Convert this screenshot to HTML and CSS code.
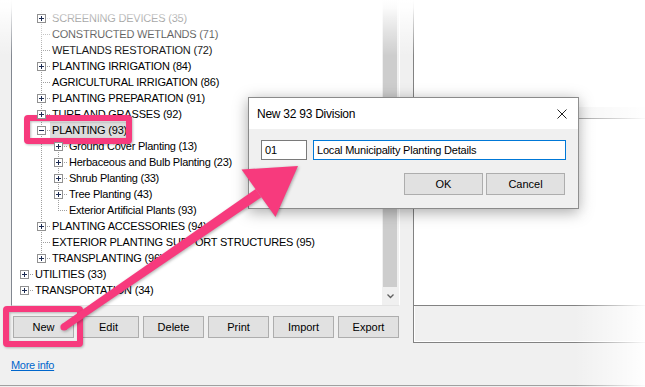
FILE: index.html
```html
<!DOCTYPE html>
<html>
<head>
<meta charset="utf-8">
<link rel="stylesheet" href="styles.css">
</head>
<body>
<div class="window">
  <div class="leftcol">
    <div class="tree">
      <ul class="nodes">
        <li class="row"><span class="c e"></span><span class="c t"><span class="bx p"></span></span><span class="lbl">SCREENING DEVICES (35)</span></li>
        <li class="row"><span class="c e"></span><span class="c t"></span><span class="lbl">CONSTRUCTED WETLANDS (71)</span></li>
        <li class="row"><span class="c e"></span><span class="c t"></span><span class="lbl">WETLANDS RESTORATION (72)</span></li>
        <li class="row"><span class="c e"></span><span class="c t"><span class="bx p"></span></span><span class="lbl">PLANTING IRRIGATION (84)</span></li>
        <li class="row"><span class="c e"></span><span class="c t"></span><span class="lbl">AGRICULTURAL IRRIGATION (86)</span></li>
        <li class="row"><span class="c e"></span><span class="c t"><span class="bx p"></span></span><span class="lbl">PLANTING PREPARATION (91)</span></li>
        <li class="row"><span class="c e"></span><span class="c t"><span class="bx p"></span></span><span class="lbl">TURF AND GRASSES (92)</span></li>
        <li class="row"><span class="c e"></span><span class="c t"><span class="bx m"></span></span><span class="lbl sel">PLANTING (93)</span></li>
        <li class="row lc"><span class="c e"></span><span class="c v"></span><span class="c t"><span class="bx p"></span></span><span class="lbl">Ground Cover Planting (13)</span></li>
        <li class="row lc"><span class="c e"></span><span class="c v"></span><span class="c t"><span class="bx p"></span></span><span class="lbl">Herbaceous and Bulb Planting (23)</span></li>
        <li class="row lc"><span class="c e"></span><span class="c v"></span><span class="c t"><span class="bx p"></span></span><span class="lbl">Shrub Planting (33)</span></li>
        <li class="row lc"><span class="c e"></span><span class="c v"></span><span class="c t"><span class="bx p"></span></span><span class="lbl">Tree Planting (43)</span></li>
        <li class="row lc"><span class="c e"></span><span class="c v"></span><span class="c l"></span><span class="lbl">Exterior Artificial Plants (93)</span></li>
        <li class="row"><span class="c e"></span><span class="c t"><span class="bx p"></span></span><span class="lbl">PLANTING ACCESSORIES (94)</span></li>
        <li class="row"><span class="c e"></span><span class="c t"></span><span class="lbl">EXTERIOR PLANTING SUPPORT STRUCTURES (95)</span></li>
        <li class="row"><span class="c e"></span><span class="c l"><span class="bx p"></span></span><span class="lbl">TRANSPLANTING (96)</span></li>
        <li class="row"><span class="c h"><span class="bx p"></span></span><span class="lbl">UTILITIES (33)</span></li>
        <li class="row"><span class="c h"><span class="bx p"></span></span><span class="lbl">TRANSPORTATION (34)</span></li>
      </ul>
      <div class="vscroll">
        <div class="thumb"></div>
        <svg class="down" width="7" height="5" viewBox="0 0 7 5"><path d="M0.5 0.5 L3.5 3.5 L6.5 0.5" fill="none" stroke="#606060" stroke-width="1.3"/></svg>
      </div>
    </div>
    <div class="btns">
      <button class="btn">New</button>
      <button class="btn">Edit</button>
      <button class="btn">Delete</button>
      <button class="btn">Print</button>
      <button class="btn">Import</button>
      <button class="btn">Export</button>
    </div>
    <a class="more" href="#">More info</a>
  </div>
  <div class="rightcol">
    <div class="list"><div class="lhead"></div></div>
    <div class="status"></div>
  </div>
</div>

<div class="dialog">
  <div class="dtitle">
    <span class="dtext">New 32 93 Division</span>
    <svg class="close" width="10" height="10" viewBox="0 0 10 10"><path d="M0.5 0.5 L9.5 9.5 M9.5 0.5 L0.5 9.5" stroke="#222" stroke-width="1"/></svg>
  </div>
  <div class="dbody">
    <div class="drow">
      <div class="inp code">01</div>
      <div class="inp name">Local Municipality Planting Details</div>
    </div>
    <div class="drow dbtns">
      <button class="dbtn">OK</button>
      <button class="dbtn">Cancel</button>
    </div>
  </div>
</div>

<div class="hl hl-planting"></div>
<div class="hl hl-new"></div>

<svg class="arrow" width="645" height="387" viewBox="0 0 645 387">
  <g fill="#f73a7d">
    <circle cx="64" cy="327" r="3.6"/>
    <polygon points="62,324 255.7,189.1 261.3,197.3 66,330"/>
    <polygon points="298,166 241.5,169.5 275.5,217"/>
  </g>
</svg>

<div class="fade-top"></div>
<div class="fade-right"></div>
</body>
</html>
```

FILE: styles.css
```css
* { box-sizing: border-box; }
html, body { margin: 0; padding: 0; }
body {
  width: 645px;
  height: 387px;
  overflow: hidden;
  position: relative;
  background: #f0f0f0;
  font-family: "Liberation Sans", Arial, sans-serif;
  font-size: 11px;
  color: #000;
}

.window {
  display: flex;
  height: 386px;
  padding-left: 11px;
  border-bottom: 1px solid #a0a0a0;
}

.leftcol {
  width: 389px;
  display: flex;
  flex-direction: column;
  flex: none;
}

.tree {
  height: 306px;
  display: flex;
  background: #fff;
  border-left: 1px solid #828790;
  border-right: 1px solid #fff;
  border-bottom: 1px solid #e3e3e3;
}

.nodes {
  flex: 1;
  margin: 0;
  padding: 10px 0 0 4px;
  list-style: none;
  overflow: hidden;
}

.row {
  display: flex;
  height: 16px;
  white-space: nowrap;
}

.c {
  width: 17px;
  height: 16px;
  flex: none;
  position: relative;
}

.c.v::before, .c.t::before, .c.l::before {
  content: "";
  position: absolute;
  left: 8px;
  top: 0;
  width: 1px;
  height: 16px;
  background: repeating-linear-gradient(to bottom, #a0a0a0 0 1px, transparent 1px 2px);
}
.c.l::before { height: 9px; }

.c.t::after, .c.l::after, .c.h::after {
  content: "";
  position: absolute;
  left: 9px;
  top: 8px;
  width: 9px;
  height: 1px;
  background: repeating-linear-gradient(to right, transparent 0 1px, #a0a0a0 1px 2px);
}

.bx {
  position: absolute;
  left: 4px;
  top: 4px;
  width: 9px;
  height: 9px;
  background: #fff;
  border: 1px solid #919191;
  z-index: 1;
}
.bx::before {
  content: "";
  position: absolute;
  left: 1px;
  top: 3px;
  width: 5px;
  height: 1px;
  background: #1c2b52;
}
.bx.p::after {
  content: "";
  position: absolute;
  left: 3px;
  top: 1px;
  width: 1px;
  height: 5px;
  background: #1c2b52;
}

.lbl {
  padding: 0 2px;
  height: 16px;
  line-height: 16px;
  letter-spacing: -0.2px;
}
.lc .lbl { letter-spacing: -0.25px; }
.lbl.sel { background: #dcdcdc; }

.vscroll {
  width: 17px;
  flex: none;
  background: #f0f0f0;
  position: relative;
}
.thumb {
  position: absolute;
  left: 1px;
  right: 2px;
  top: 0;
  height: 287px;
  background: #cdcdcd;
}
.down {
  position: absolute;
  left: 5px;
  top: 294px;
}

.btns {
  display: flex;
  gap: 4px;
  margin-top: 10px;
  padding-left: 2px;
}
.btn, .dbtn {
  font-family: "Liberation Sans", Arial, sans-serif;
  font-size: 11px;
  color: #000;
  background: #e1e1e1;
  border: 1px solid #adadad;
  padding: 0;
  margin: 0;
}
.btn {
  width: 61px;
  height: 22px;
}

.more {
  margin-top: 21px;
  color: #0066cc;
  text-decoration: underline;
  font-size: 11px;
  letter-spacing: -0.3px;
  line-height: 13px;
  align-self: flex-start;
}

.rightcol {
  margin-left: 13px;
  width: 240px;
  flex: none;
}
.list {
  height: 306px;
  background: #fff;
  border-left: 1px solid #828282;
  border-bottom: 1px solid #828282;
  padding-top: 107px;
}
.lhead {
  height: 12px;
  background: #f6f6f6;
  border-bottom: 1px solid #a0a0a0;
}
.status {
  height: 37px;
  border-left: 1px solid #828282;
  border-bottom: 1px solid #828282;
  box-shadow: inset 1px -1px 0 #fff;
}

.dialog {
  position: absolute;
  left: 248px;
  top: 97px;
  width: 331px;
  height: 112px;
  background: #f0f0f0;
  border: 1px solid #8a8a8a;
  box-shadow: 0 3px 14px rgba(0, 0, 0, 0.35);
}
.dtitle {
  height: 31px;
  background: #fff;
  display: flex;
  align-items: center;
  justify-content: space-between;
  padding: 0 11px 0 8px;
}
.dtext {
  font-size: 12px;
  letter-spacing: -0.25px;
}
.dbody {
  padding: 11px 12px 0 12px;
}
.drow {
  display: flex;
  gap: 6px;
}
.inp {
  height: 20px;
  background: #fff;
  line-height: 18px;
  padding-left: 3px;
  font-size: 11px;
  letter-spacing: -0.2px;
  white-space: nowrap;
}
.inp.code { width: 46px; border: 1px solid #7a7a7a; letter-spacing: 0; }
.inp.name { width: 253px; border: 1px solid #0078d7; }
.dbtns {
  justify-content: flex-end;
  gap: 3px;
  margin-top: 13px;
  padding-right: 1px;
}
.dbtn {
  width: 79px;
  height: 22px;
}

.hl {
  position: absolute;
  border: 6px solid #f73a7d;
  border-radius: 4px;
  pointer-events: none;
  filter: drop-shadow(1px 1px 1px rgba(0, 0, 0, 0.25));
}
.hl-planting { left: 24px; top: 115px; width: 108px; height: 29px; }
.hl-new { left: 3px; top: 306px; width: 80px; height: 41px; }

.arrow {
  position: absolute;
  left: 0;
  top: 0;
  pointer-events: none;
  filter: drop-shadow(1px 1px 1.5px rgba(0, 0, 0, 0.3));
}

.fade-top {
  position: absolute;
  left: 0;
  top: 0;
  width: 645px;
  height: 56px;
  pointer-events: none;
  background: linear-gradient(to bottom, #fff 0, rgba(255,255,255,0.92) 8px, rgba(255,255,255,0.7) 18px, rgba(255,255,255,0.4) 34px, rgba(255,255,255,0) 56px);
}
.fade-right {
  position: absolute;
  right: 0;
  top: 0;
  width: 70px;
  height: 387px;
  pointer-events: none;
  background: linear-gradient(to right, rgba(255,255,255,0), rgba(255,255,255,0.95));
}
```
